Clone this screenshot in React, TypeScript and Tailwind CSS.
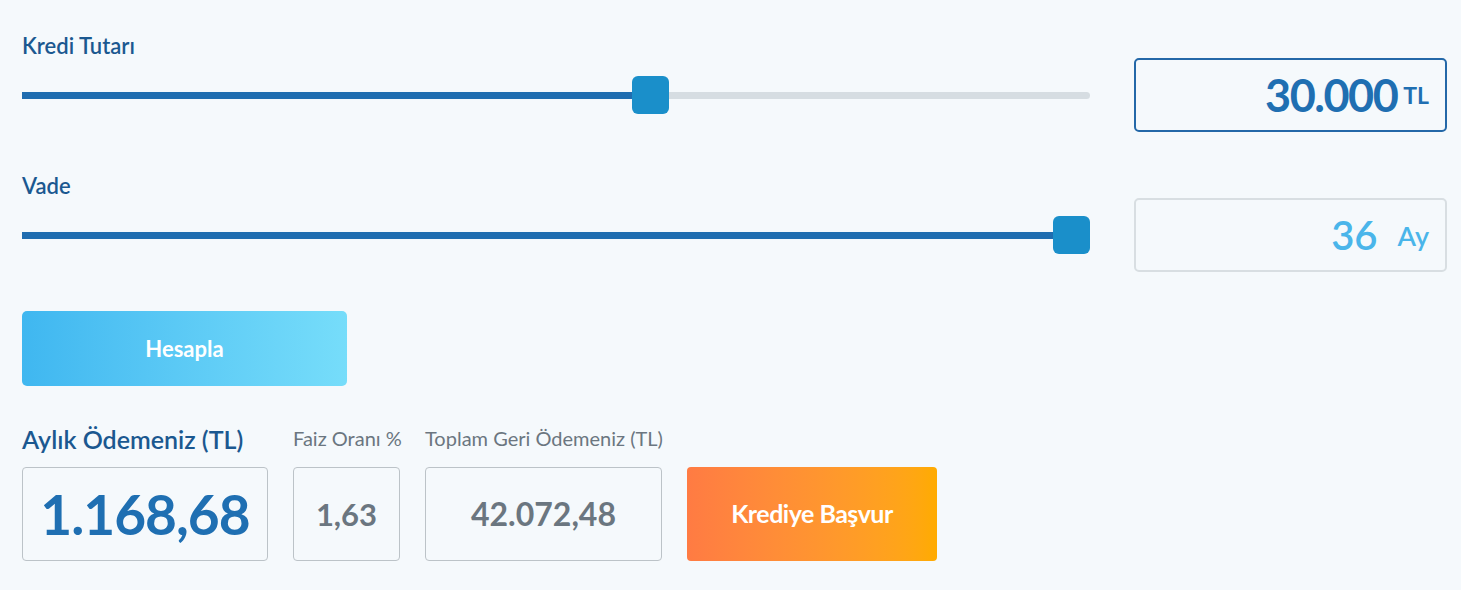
import React from "react";

const font = { fontFamily: "Lato, 'Noto Sans', sans-serif" };

// thumb is 37px wide, track is 1068px
function Slider({ thumbLeft }: { thumbLeft: number }) {
  return (
    <div className="relative h-[74px] flex items-center">
      <div className="relative w-full h-[7px] rounded-full bg-[#d6dde2]">
        <div
          className="absolute left-0 top-0 h-full bg-[#1f6db0]"
          style={{ width: thumbLeft + 18 }}
        />
      </div>
      <div
        className="absolute top-1/2 -translate-y-1/2 w-[37px] h-[38px] rounded-[6px] bg-[#1a8fca]"
        style={{ left: thumbLeft }}
      />
    </div>
  );
}

function SliderRow({
  label,
  thumbLeft,
  children,
  active,
}: {
  label: string;
  thumbLeft: number;
  children: React.ReactNode;
  active?: boolean;
}) {
  return (
    <div className="flex items-end gap-[44px]">
      <div className="w-[1068px] flex flex-col">
        <div className="text-[22px] leading-[25px] font-semibold text-[#1b5890]">{label}</div>
        <Slider thumbLeft={thumbLeft} />
      </div>
      <div
        className={
          "w-[313px] h-[74px] rounded-[5px] border-2 flex items-center justify-end pr-[16px] " +
          (active ? "border-[#2468a8]" : "border-[#d8dee2]")
        }
      >
        {children}
      </div>
    </div>
  );
}

export default function App() {
  return (
    <div className="min-h-screen w-full bg-[#f5f9fc] pl-[22px] pt-[33px]" style={font}>
      <div className="flex flex-col gap-[41px]">
        <SliderRow label="Kredi Tutarı" thumbLeft={610} active>
          <span className="text-[45px] font-bold text-[#1f6fb2] tracking-[-1.5px] leading-none">30.000</span>
          <span className="ml-[6px] text-[23px] font-bold text-[#1f6fb2] leading-none">TL</span>
        </SliderRow>
        <SliderRow label="Vade" thumbLeft={1031}>
          <span className="text-[40px] font-semibold text-[#4ab5ea] leading-none">36</span>
          <span className="ml-[20px] text-[27px] font-semibold text-[#4ab5ea] leading-none">Ay</span>
        </SliderRow>
      </div>

      <button className="mt-[39px] w-[325px] h-[75px] rounded-[5px] bg-gradient-to-r from-[#3fb7f0] to-[#76ddfa] text-white text-[22px] font-bold">
        Hesapla
      </button>

      <div className="mt-[38px] flex items-end gap-[25px]">
        <div className="w-[246px] flex flex-col">
          <div className="text-[25px] leading-[30px] font-semibold text-[#1b5890] whitespace-nowrap">Aylık Ödemeniz (TL)</div>
          <div className="mt-[13px] h-[94px] rounded-[4px] border border-[#bcc3c8] flex items-center justify-center">
            <span className="text-[55px] font-bold text-[#1f6fb2] tracking-[-1px] leading-none">1.168,68</span>
          </div>
        </div>
        <div className="w-[107px] flex flex-col">
          <div className="text-[20px] leading-[24px] text-[#6b7680] whitespace-nowrap">Faiz Oranı %</div>
          <div className="mt-[17px] h-[94px] rounded-[4px] border border-[#bcc3c8] flex items-center justify-center">
            <span className="text-[31px] font-bold text-[#6b7680] leading-none">1,63</span>
          </div>
        </div>
        <div className="w-[237px] flex flex-col">
          <div className="text-[20px] leading-[24px] text-[#6b7680] whitespace-nowrap">Toplam Geri Ödemeniz (TL)</div>
          <div className="mt-[17px] h-[94px] rounded-[4px] border border-[#bcc3c8] flex items-center justify-center">
            <span className="text-[32px] font-bold text-[#6b7680] leading-none">42.072,48</span>
          </div>
        </div>
        <button className="w-[250px] h-[94px] rounded-[4px] bg-gradient-to-r from-[#ff7b43] to-[#ffab00] text-white text-[25px] font-bold tracking-[-0.5px]">
          Krediye Başvur
        </button>
      </div>
    </div>
  );
}
